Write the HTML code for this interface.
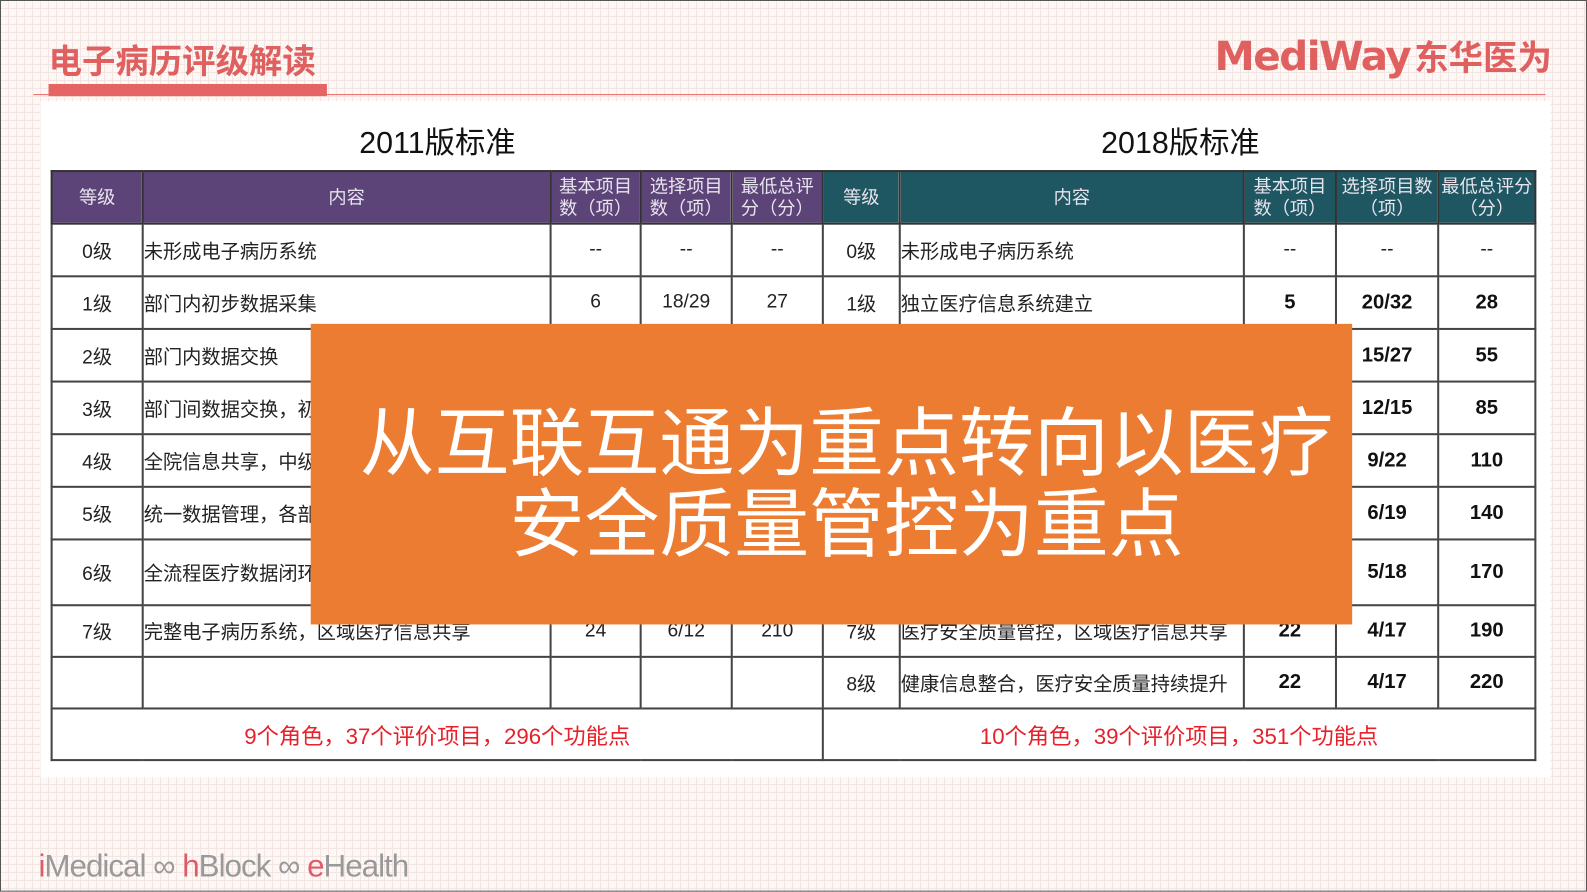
<!DOCTYPE html>
<html><head><meta charset="utf-8"><style>
body{margin:0;width:1587px;height:892px;position:relative;overflow:hidden;font-family:"Liberation Sans","Noto Sans CJK SC",sans-serif;
background-color:#fdf8f6;background-image:linear-gradient(#f3e6e2 1px,transparent 1px),linear-gradient(90deg,#f3e6e2 1px,transparent 1px);background-size:8px 8px;}
#w{position:absolute;left:0;top:0;width:1568px;height:881px;transform:scale(1.0121);transform-origin:0 0}
.frame{position:absolute;left:0;top:0;width:1566px;height:879px;border:1px solid #555;border-right:2px solid #555;}
.white{position:absolute;left:40px;top:100px;width:1492px;height:668px;background:#fff;}
.title{position:absolute;left:48px;top:34px;font-size:33px;font-weight:bold;color:#e05f5f;}
.bar{position:absolute;left:48px;top:83px;width:275px;height:12px;background:#e46564}
.line{position:absolute;left:33px;top:93px;width:1494px;height:1px;background:#e46564}
.logo{position:absolute;left:1200px;top:30px;font-size:40px;font-weight:bold;color:#e06060;letter-spacing:-1.5px;font-family:"DejaVu Sans","Noto Sans CJK SC",sans-serif}
.logo span{font-family:"Noto Sans CJK SC",sans-serif;font-size:34px;letter-spacing:0;margin-left:4px}
.h{position:absolute;top:116px;font-size:30px;color:#111}
table{position:absolute;left:50px;top:168px;border-collapse:collapse;table-layout:fixed;width:1466px}
td{border:2px solid #444;text-align:center;font-size:19px;color:#222;padding:0;overflow:hidden;white-space:nowrap}
td.l{text-align:left}
tr.hd td{color:#e8e4ee;font-size:18px;line-height:22px;border-color:#333}
.p{background:#5d4478}.t{background:#1e5661}
b{font-weight:bold;color:#111;font-size:20px}
.red{color:#e8202a;font-size:22px}
.orange{position:absolute;left:307px;top:320px;width:1029px;height:297px;background:#ec7c32;color:#fff;font-family:"Noto Sans CJK SC",sans-serif;font-size:74px;text-align:center;line-height:80px;padding-top:73px;padding-left:30px;box-sizing:border-box;white-space:nowrap}
.foot{position:absolute;left:38px;top:838px;font-size:31px;color:#999;letter-spacing:-1px}
.foot i{font-style:normal;color:#e05a6a}
</style></head><body><div id="w">
<div class="frame"></div>
<div class="white"></div>
<div class="title">电子病历评级解读</div>
<div class="bar"></div><div class="line"></div>
<div class="logo">MediWay<span>东华医为</span></div>
<div class="h" style="left:355px">2011版标准</div>
<div class="h" style="left:1088px">2018版标准</div>
<table>
<colgroup><col style="width:90px"><col style="width:403px"><col style="width:89px"><col style="width:90px"><col style="width:90px"><col style="width:76px"><col style="width:340px"><col style="width:91px"><col style="width:101px"><col style="width:96px"></colgroup>
<tr class="hd" style="height:52px"><td class="p">等级</td><td class="p">内容</td><td class="p">基本项目<br>数（项）</td><td class="p">选择项目<br>数（项）</td><td class="p">最低总评<br>分（分）</td><td class="t">等级</td><td class="t">内容</td><td class="t">基本项目<br>数（项）</td><td class="t">选择项目数<br>（项）</td><td class="t">最低总评分<br>（分）</td></tr>
<tr style="height:52px"><td>0级</td><td class="l">未形成电子病历系统</td><td>--</td><td>--</td><td>--</td><td>0级</td><td class="l">未形成电子病历系统</td><td>--</td><td>--</td><td>--</td></tr>
<tr style="height:52px"><td>1级</td><td class="l">部门内初步数据采集</td><td>6</td><td>18/29</td><td>27</td><td>1级</td><td class="l">独立医疗信息系统建立</td><td><b>5</b></td><td><b>20/32</b></td><td><b>28</b></td></tr>
<tr style="height:52px"><td>2级</td><td class="l">部门内数据交换</td><td>10</td><td>15/27</td><td>55</td><td>2级</td><td class="l">医疗信息部门内部交换</td><td><b>10</b></td><td><b>15/27</b></td><td><b>55</b></td></tr>
<tr style="height:52px"><td>3级</td><td class="l">部门间数据交换，初级医疗决策支持</td><td>14</td><td>12/25</td><td>85</td><td>3级</td><td class="l">部门间数据交换</td><td><b>14</b></td><td><b>12/15</b></td><td><b>85</b></td></tr>
<tr style="height:52px"><td>4级</td><td class="l">全院信息共享，中级医疗决策支持</td><td>16</td><td>10/23</td><td>110</td><td>4级</td><td class="l">全院信息共享</td><td><b>16</b></td><td><b>9/22</b></td><td><b>110</b></td></tr>
<tr style="height:52px"><td>5级</td><td class="l">统一数据管理，各部门系统数据集成</td><td>20</td><td>6/19</td><td>140</td><td>5级</td><td class="l">统一数据管理</td><td><b>20</b></td><td><b>6/19</b></td><td><b>140</b></td></tr>
<tr style="height:65px"><td>6级</td><td class="l">全流程医疗数据闭环管理</td><td>21</td><td>5/18</td><td>170</td><td>6级</td><td class="l">全流程医疗数据闭环管理</td><td><b>21</b></td><td><b>5/18</b></td><td><b>170</b></td></tr>
<tr style="height:51px"><td>7级</td><td class="l">完整电子病历系统，区域医疗信息共享</td><td>24</td><td>6/12</td><td>210</td><td>7级</td><td class="l">医疗安全质量管控，区域医疗信息共享</td><td><b>22</b></td><td><b>4/17</b></td><td><b>190</b></td></tr>
<tr style="height:51px"><td></td><td></td><td></td><td></td><td></td><td>8级</td><td class="l">健康信息整合，医疗安全质量持续提升</td><td><b>22</b></td><td><b>4/17</b></td><td><b>220</b></td></tr>
<tr style="height:51px"><td colspan="5" class="red">9个角色，37个评价项目，296个功能点</td><td colspan="5" class="red">10个角色，39个评价项目，351个功能点</td></tr>
</table>
<div class="orange">从互联互通为重点转向以医疗<br>安全质量管控为重点</div>
<div class="foot"><i>i</i>Medical ∞ <i>h</i>Block ∞ <i>e</i>Health</div>
</div></body></html>
